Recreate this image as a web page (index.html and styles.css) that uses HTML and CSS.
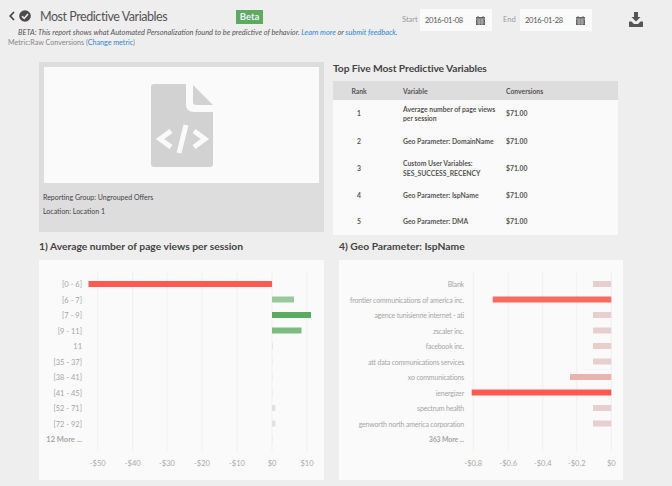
FILE: index.html
```html
<!DOCTYPE html>
<html>
<head>
  <meta charset="UTF-8">
  <title>Most Predictive Variables</title>
  <link rel="stylesheet" href="styles.css">
</head>
<body>

<header class="top">
  <svg class="back" width="6" height="10" viewBox="0 0 6 10"><path d="M5 1 1.200 5 5 9" fill="none" stroke="#444" stroke-width="1.700"/></svg>
  <svg class="check" width="12" height="12" viewBox="0 0 12 12"><circle cx="6" cy="6" r="5.800" fill="#4b4b4b"/><path d="M3 6.200 5.200 8.400 9 3.900" fill="none" stroke="#eee" stroke-width="1.600"/></svg>
  <h1>Most Predictive Variables</h1>
  <span class="badge">Beta</span>
  <label class="date-label start">Start</label>
  <div class="date">
    <span>2016-01-08</span>
    <svg width="9" height="9" viewBox="0 0 9 9"><path d="M0 1h9v8H0z" fill="#666"/><path d="M2 0v2M7 0v2" stroke="#666"/><path d="M0 3h9M1 5h7M1 7h7M3 3v6M6 3v6" stroke="#ddd" stroke-width=".6"/></svg>
  </div>
  <label class="date-label end">End</label>
  <div class="date">
    <span>2016-01-28</span>
    <svg width="9" height="9" viewBox="0 0 9 9"><path d="M0 1h9v8H0z" fill="#666"/><path d="M2 0v2M7 0v2" stroke="#666"/><path d="M0 3h9M1 5h7M1 7h7M3 3v6M6 3v6" stroke="#ddd" stroke-width=".6"/></svg>
  </div>
  <svg class="download" width="14" height="15" viewBox="0 0 14 15"><path d="M5 0h4v5h2.500L7 9.500 2.500 5H5z" fill="#555"/><path d="M0 9.500h2.500L5 12h4l2.500-2.500H14V15H0z" fill="#555"/></svg>
</header>

<p class="note">BETA: This report shows what Automated Personalization found to be predictive of behavior. <a href="#">Learn more</a> or <a href="#">submit feedback</a>.</p>
<p class="metric">Metric:Raw Conversions (<a href="#">Change metric</a>)</p>

<section class="summary">
  <div class="preview">
    <div class="preview-img">
      <svg width="62" height="83" viewBox="0 0 62 83">
        <path d="M3 0H35V20Q35 28 43 28H62V80Q62 83 59 83H3Q0 83 0 80V3Q0 0 3 0Z" fill="#d2d2d2"/>
        <path d="M42 1 62 21H45Q42 21 42 18Z" fill="#d2d2d2"/>
        <path d="M20 47 9 55 20 63M43 47 54 55 43 63" fill="none" stroke="#fafafa" stroke-width="5"/>
        <path d="M35 41 28 69" fill="none" stroke="#fafafa" stroke-width="5"/>
      </svg>
    </div>
    <p>Reporting Group: Ungrouped Offers</p>
    <p>Location: Location 1</p>
  </div>

  <div class="top-five">
    <h2>Top Five Most Predictive Variables</h2>
    <table>
      <thead>
        <tr class="head"><th class="rank">Rank</th><th>Variable</th><th>Conversions</th></tr>
      </thead>
      <tbody>
        <tr class="r1"><td class="rank">1</td><td>Average number of page views<br>per session</td><td>$71.00</td></tr>
        <tr class="r2"><td class="rank">2</td><td>Geo Parameter: DomainName</td><td>$71.00</td></tr>
        <tr class="r3"><td class="rank">3</td><td>Custom User Variables:<br>SES_SUCCESS_RECENCY</td><td>$71.00</td></tr>
        <tr class="r4"><td class="rank">4</td><td>Geo Parameter: IspName</td><td>$71.00</td></tr>
        <tr class="r5"><td class="rank">5</td><td>Geo Parameter: DMA</td><td>$71.00</td></tr>
      </tbody>
    </table>
  </div>
</section>

<section class="charts">
  <div class="chart-col">
    <h2>1) Average number of page views per session</h2>
    <svg class="chart" width="285" height="220" viewBox="0 0 285 220">
      <g class="grid">
        <path d="M58.700 12V191M93.700 12V191M128 12V191M163 12V191M198 12V191M233 12V191M268 12V191"/>
      </g>
      <g class="labels">
        <text x="43" y="27">[0 - 6]</text>
        <text x="43" y="43">[6 - 7]</text>
        <text x="43" y="58">[7 - 9]</text>
        <text x="43" y="74">[9 - 11]</text>
        <text x="43" y="89">11</text>
        <text x="43" y="105">[35 - 37]</text>
        <text x="43" y="120">[38 - 41]</text>
        <text x="43" y="136">[41 - 45]</text>
        <text x="43" y="151">[52 - 71]</text>
        <text x="43" y="167">[72 - 92]</text>
        <text class="more" x="43" y="182">12 More ...</text>
      </g>
      <rect x="49.500" y="21" width="183.500" height="6" fill="#ff5a4f"/>
      <rect x="233" y="36.500" width="22" height="6" fill="#98c99b"/>
      <rect x="233" y="52" width="39" height="6" fill="#58ab5f"/>
      <rect x="233" y="67.500" width="29.500" height="6" fill="#7cbc81"/>
      <rect x="233" y="83" width="1" height="6" fill="#e6e6e6"/>
      <rect x="233" y="98.500" width="1" height="6" fill="#eee"/>
      <rect x="233" y="114" width="1" height="6" fill="#eee"/>
      <rect x="233" y="129.500" width="1" height="6" fill="#eee"/>
      <rect x="233" y="145" width="3.500" height="6" fill="#dfe3df"/>
      <rect x="233" y="160.500" width="3.500" height="6" fill="#dfe3df"/>
      <rect x="233" y="176" width="1" height="6" fill="#eee"/>
      <g class="ticks">
        <text x="58.700" y="206">-$50</text>
        <text x="93.700" y="206">-$40</text>
        <text x="128" y="206">-$30</text>
        <text x="163" y="206">-$20</text>
        <text x="198" y="206">-$10</text>
        <text x="233" y="206">$0</text>
        <text x="268" y="206">$10</text>
      </g>
    </svg>
  </div>

  <div class="chart-col">
    <h2>4) Geo Parameter: IspName</h2>
    <svg class="chart" width="284" height="220" viewBox="0 0 284 220">
      <g class="grid">
        <path d="M134.300 12V191M169.300 12V191M203.700 12V191M237.700 12V191M272.300 12V191"/>
      </g>
      <g class="labels tight">
        <text x="125" y="27">Blank</text>
        <text x="125" y="43">frontier communications of america inc.</text>
        <text x="125" y="58">agence tunisienne internet - ati</text>
        <text x="125" y="74">zscaler inc.</text>
        <text x="125" y="89">facebook inc.</text>
        <text x="125" y="105">att data communications services</text>
        <text x="125" y="120">xo communications</text>
        <text x="125" y="136">ienergizer</text>
        <text x="125" y="151">spectrum health</text>
        <text x="125" y="167">genworth north america corporation</text>
        <text class="more" x="125" y="182">363 More ...</text>
      </g>
      <rect x="254" y="21" width="18.300" height="6" fill="#e6cfcd"/>
      <rect x="153.700" y="36.500" width="118.600" height="6" fill="#f96b60"/>
      <rect x="254" y="52" width="18.300" height="6" fill="#e6cfcd"/>
      <rect x="254" y="67.500" width="18.300" height="6" fill="#e6cfcd"/>
      <rect x="254" y="83" width="18.300" height="6" fill="#e6cfcd"/>
      <rect x="254" y="98.500" width="18.300" height="6" fill="#e6cfcd"/>
      <rect x="231" y="114" width="41.300" height="6" fill="#e9b4b0"/>
      <rect x="132.700" y="129.500" width="139.600" height="6" fill="#ff5a4f"/>
      <rect x="254" y="145" width="18.300" height="6" fill="#e6cfcd"/>
      <rect x="254" y="160.500" width="18.300" height="6" fill="#e6cfcd"/>
      <g class="ticks">
        <text x="134.300" y="206">-$0.8</text>
        <text x="169.300" y="206">-$0.6</text>
        <text x="203.700" y="206">-$0.4</text>
        <text x="237.700" y="206">-$0.2</text>
        <text x="272.300" y="206">$0</text>
      </g>
    </svg>
  </div>
</section>

</body>
</html>
```

FILE: styles.css
```css
html, body {
  margin: 0;
  height: 100%;
}

body {
  background: #eeeeee;
  color: #444;
  font-family: "Lato", "Open Sans", sans-serif;
  font-size: 7.5px;
  overflow: hidden;
}

a {
  color: #2d86d4;
  text-decoration: none;
}

h1, h2, p {
  margin: 0;
  font-weight: normal;
}

/* header */
.top {
  display: flex;
  align-items: center;
  height: 22px;
  padding: 9px 0 0 9px;
}

.back {
  margin: 0 4px 8px 0;
}

.check {
  margin: 0 9px 8px 0;
}

h1 {
  width: 196px;
  margin-bottom: 8px;
  font-size: 12.5px;
  letter-spacing: -0.45px;
  color: #555;
}

.badge {
  width: 27px;
  line-height: 14px;
  margin-bottom: 6px;
  background: #5cab5f;
  color: #eef;
  font-size: 9.5px;
  font-weight: 700;
  text-align: center;
}

.date-label {
  color: #999;
  font-size: 7.5px;
  margin-bottom: 2px;
}

.date-label.start {
  margin-left: 139px;
  width: 18px;
}

.date-label.end {
  margin-left: 11px;
  width: 17px;
}

.date {
  display: flex;
  align-items: center;
  justify-content: space-between;
  box-sizing: border-box;
  width: 72px;
  height: 22px;
  padding: 0 7px 0 5px;
  background: #fafafa;
  color: #555;
  font-size: 7.5px;
  letter-spacing: -0.25px;
}

.download {
  margin-left: 37px;
  margin-top: -2px;
}

.note {
  margin: -3px 0 0 18px;
  height: 10px;
  line-height: 10px;
  font-size: 7.4px;
  font-style: italic;
  color: #555;
}

.metric {
  margin-left: 8px;
  height: 10px;
  line-height: 10px;
  font-size: 7.15px;
  color: #888;
}

/* preview and table */
.summary {
  display: flex;
  margin: 14px 0 0 39px;
  height: 174px;
}

.preview {
  box-sizing: border-box;
  width: 285px;
  height: 170px;
  margin-right: 9px;
  padding: 5px 5px 0;
  background: #dddddd;
  font-size: 7px;
  font-weight: 700;
  color: #444;
}

.preview p {
  line-height: 14px;
  margin-left: -1px;
}

.preview-img {
  display: flex;
  justify-content: center;
  align-items: center;
  height: 116px;
  margin-bottom: 7px;
  background: #fafafa;
}

.top-five {
  width: 285px;
}

h2 {
  height: 13px;
  line-height: 13px;
  font-size: 10.3px;
  font-weight: 700;
  color: #444;
}

.top-five h2 {
  margin-bottom: 6px;
  letter-spacing: -0.1px;
}

table {
  width: 285px;
  border-collapse: collapse;
  background: #fafafa;
  font-size: 6.8px;
  font-weight: 700;
  color: #555;
}

th {
  height: 19px;
  padding: 0;
  background: #dddddd;
  font-weight: 700;
  text-align: left;
}

td {
  padding: 0;
  line-height: 9.500px;
}

th:nth-child(1), td:nth-child(1) {
  width: 70px;
  text-align: center;
  padding-right: 18px;
  box-sizing: border-box;
  padding-left: 0;
}

th:nth-child(2), td:nth-child(2) {
  width: 103px;
}

.r1 { height: 28px; }
.r2 { height: 27px; }
.r3 { height: 27px; }
.r4 { height: 27px; }
.r5 { height: 26px; }

/* charts */
.charts {
  display: flex;
  margin: 4px 0 0 39px;
}

.chart-col {
  width: 300px;
}

.chart-col h2 {
  margin-bottom: 7px;
}

.chart {
  display: block;
  background: #fafafa;
}

.grid path {
  stroke: #f0f0f0;
  stroke-width: 1;
  fill: none;
}

.labels text {
  font-size: 7.500px;
  fill: #a6a6a6;
  text-anchor: end;
}

.labels.tight text {
  font-size: 7px;
  letter-spacing: -0.18px;
}

.labels .more {
  font-weight: 700;
}

.ticks text {
  font-size: 7.500px;
  fill: #aaa;
  text-anchor: middle;
}
```
